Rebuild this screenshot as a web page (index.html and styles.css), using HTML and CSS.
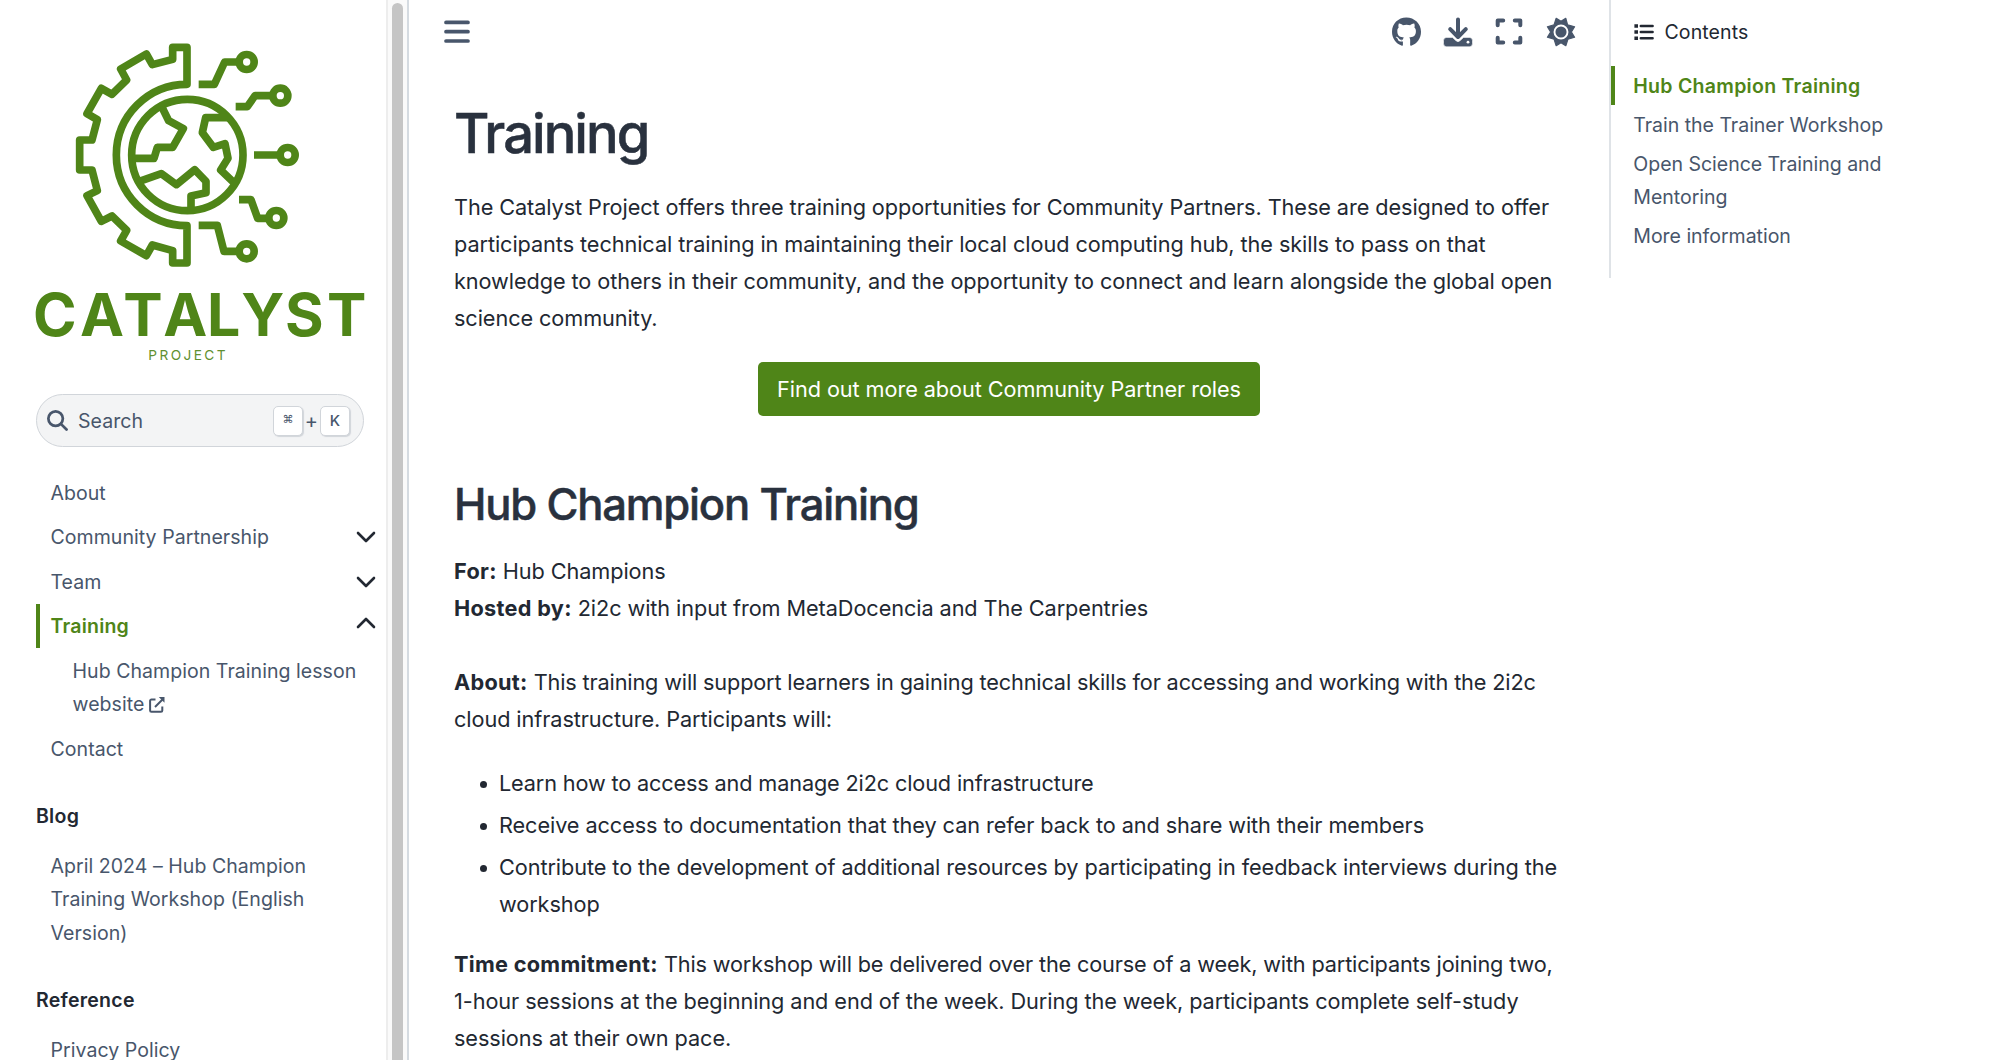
FILE: index.html
```html
<!DOCTYPE html>
<html lang="en">
<head>
<meta charset="utf-8">
<title>Training</title>
<link rel="stylesheet" href="styles.css">
</head>
<body>
<div class="page">
  <aside class="sidebar">
    <div class="sidebar-content">
      <a class="logo">
        <svg viewBox="48 60 984 972" width="328" height="324">
          <g fill="none" stroke="#4f8518" stroke-width="23" stroke-linejoin="round">
            <path d="M501 193V82H458V118L397 134L379 102L302 147L320 180L276 223L244 205L201 281L232 299L216 360H179V450H216L232 512L201 527L244 604L276 588L320 631L302 663L379 707L397 675L458 692V729H501V617A212 212 0 0 1 501 193Z"/>
            <circle cx="502" cy="405" r="167"/>
            <path d="M426 262L446 302L490 326L458 382H412L402 415H338"/>
            <path d="M627 293H557L547 338L580 382L615 371L624 415L602 450L642 488"/>
            <path d="M358 484L424 461L469 494L524 449L558 484V518L513 528V572"/>
            <path d="M536 193H583L614 126H655M647 260H682L705 227H755M702 405H775M657 539H693L713 595H744M536 616H592L612 694H655"/>
            <circle cx="680" cy="126" r="22.5"/>
            <circle cx="781" cy="227" r="22.5"/>
            <circle cx="803" cy="405" r="22.5"/>
            <circle cx="769" cy="594" r="22.5"/>
            <circle cx="680" cy="694" r="22.5"/>
          </g>
          <text class="logo-name" y="948" x="39 180 310 430 561 664 795 921">CATALYST</text>
          <text class="logo-sub" y="1020" x="385">PROJECT</text>
        </svg>
      </a>
      <div class="search">
        <svg class="search-icon" viewBox="0 0 20 20"><circle cx="8.2" cy="8.2" r="6.9"/><path d="M13.2 13.2L18.6 18.6"/></svg>
        <span class="search-label">Search</span>
        <kbd class="cmd">⌘</kbd><span class="plus">+</span><kbd>K</kbd>
      </div>
      <nav class="nav">
        <a class="item">About</a>
        <a class="item">Community Partnership<svg class="chevron" viewBox="0 0 20 12"><path d="M2 2L10 10L18 2"/></svg></a>
        <a class="item">Team<svg class="chevron" viewBox="0 0 20 12"><path d="M2 2L10 10L18 2"/></svg></a>
        <a class="item active"><span>Training</span><svg class="chevron up" viewBox="0 0 20 12"><path d="M2 10L10 2L18 10"/></svg></a>
        <a class="item sub"><span>Hub Champion Training lesson<br>website <svg class="external" viewBox="0 0 16 16"><path d="M6.5 2.5H2.4A1.3 1.3 0 0 0 1.1 3.8V13.5A1.3 1.3 0 0 0 2.4 14.8H12A1.3 1.3 0 0 0 13.3 13.5V9.5"/><path d="M6 10L14 2"/><path class="solid" d="M9.8 0H15.5V5.7Z"/></svg></span></a>
        <a class="item">Contact</a>
        <p class="caption">Blog</p>
        <a class="item"><span>April 2024 – Hub Champion<br>Training Workshop (English<br>Version)</span></a>
        <p class="caption">Reference</p>
        <a class="item">Privacy Policy</a>
      </nav>
    </div>
    <div class="scrollbar"><div class="thumb"></div></div>
  </aside>
  <main class="main">
    <header class="toolbar">
      <svg class="menu" viewBox="0 0 26 24"><path d="M2 2.4H24M2 11.7H24M2 21H24"/></svg>
      <div class="actions">
        <svg viewBox="0 0 496 512" width="29" height="30"><path d="M165.900 397.400c0 2-2.300 3.600-5.200 3.600-3.300.3-5.600-1.300-5.600-3.600 0-2 2.300-3.600 5.200-3.600 3-.3 5.600 1.300 5.600 3.600zM244.800 8C106.100 8 0 113.300 0 252c0 110.900 69.800 205.800 169.500 239.200 12.800 2.300 17.300-5.600 17.300-12.100 0-6.200-.3-40.400-.3-61.400 0 0-70 15-84.700-29.800 0 0-11.400-29.100-27.800-36.600 0 0-22.900-15.700 1.600-15.400 0 0 24.900 2 38.600 25.800 21.900 38.600 58.600 27.500 72.900 20.900 2.300-16 8.800-27.100 16-33.700-55.900-6.200-112.300-14.300-112.300-110.500 0-27.500 7.600-41.300 23.600-58.900-2.600-6.500-11.100-33.300 2.600-67.900 20.900-6.500 69 27 69 27 20-5.600 41.500-8.500 62.800-8.500s42.800 2.900 62.800 8.500c0 0 48.100-33.600 69-27 13.700 34.700 5.200 61.400 2.600 67.900 16 17.700 25.800 31.500 25.800 58.900 0 96.500-58.900 104.200-114.800 110.500 9.200 7.900 17 22.900 17 46.400 0 33.700-.3 75.400-.3 83.600 0 6.500 4.600 14.400 17.300 12.100C428.200 457.800 496 362.900 496 252 496 113.300 383.500 8 244.800 8z"/></svg>
        <svg viewBox="0 0 30 30" width="30" height="30"><path d="M15 2.500V19M7.200 12.200L15 20L22.800 12.200" class="stroke"/><path d="M3.700 20.400H9.500L12.800 23.600A3.100 3.100 0 0 0 17.200 23.600L20.500 20.400H26.300A3.200 3.200 0 0 1 29.500 23.600V26.600A3.200 3.200 0 0 1 26.300 29.800H3.700A3.200 3.200 0 0 1 .5 26.600V23.600A3.200 3.200 0 0 1 3.700 20.400Z" stroke="#fff" stroke-width=".6"/><circle cx="25" cy="25.200" r="1.400" fill="#fff"/></svg>
        <svg viewBox="0 0 28 30" width="28" height="30"><path d="M2.700 8.200V3.400H8.200M19.800 3.400H25.300V8.200M2.700 20.700V25.500H8.200M19.800 25.500H25.300V20.700" class="stroke"/></svg>
        <svg viewBox="0 0 30 30" width="30" height="30"><path stroke="#48566b" stroke-width="1.200" stroke-linejoin="round" d="M10.200 1.300L15 4.300L19.800 1.300L21.600 7.800L28.600 9.800L25.400 15L28.600 20.200L21.900 22.200L19.800 28.700L15 25.700L10.200 28.700L8.100 22.200L1.400 20.200L4.600 15L1.400 9.800L8.100 7.800Z"/><circle cx="15" cy="15" r="6.500" fill="#48566b" stroke="#fff" stroke-width="1.900"/></svg>
      </div>
    </header>
    <article class="article">
      <h1>Training</h1>
      <p>The Catalyst Project offers three training opportunities for Community Partners. These are designed to offer<br>participants technical training in maintaining their local cloud computing hub, the skills to pass on that<br>knowledge to others in their community, and the opportunity to connect and learn alongside the global open<br>science community.</p>
      <div class="cta"><a class="button">Find out more about Community Partner roles</a></div>
      <h2>Hub Champion Training</h2>
      <p><strong>For:</strong> Hub Champions<br><strong>Hosted by:</strong> 2i2c with input from MetaDocencia and The Carpentries<br><br><strong>About:</strong> <span class="tight">This training will support learners in gaining technical skills for accessing and working with the 2i2c</span><br>cloud infrastructure. Participants will:</p>
      <ul>
        <li><span class="tight">Learn how to access and manage 2i2c cloud infrastructure</span></li>
        <li>Receive access to documentation that they can refer back to and share with their members</li>
        <li>Contribute to the development of additional resources by participating in feedback interviews during the<br>workshop</li>
      </ul>
      <p><strong>Time commitment:</strong> <span class="tight">This workshop will be delivered over the course of a week, with participants joining two,</span><br>1-hour sessions at the beginning and end of the week. During the week, participants complete self-study<br>sessions at their own pace.</p>
    </article>
  </main>
  <aside class="toc">
    <div class="toc-title"><svg viewBox="0 0 20 18" width="20" height="18"><path d="M6.800 3H18.600M6.800 9H18.600M6.800 15.300H18.600"/><path class="dots" d="M.4 3H4M.4 9H4M.4 15.300H4"/></svg>Contents</div>
    <a class="toc-item current">Hub Champion Training</a>
    <a class="toc-item">Train the Trainer Workshop</a>
    <a class="toc-item">Open Science Training and<br>Mentoring</a>
    <a class="toc-item">More information</a>
  </aside>
</div>
</body>
</html>
```
FILE: styles.css
```css
* { box-sizing: border-box; }
html, body { height: 100%; margin: 0; overflow: hidden; }
body {
  background: #fff;
  color: #222832;
  font-family: Inter, "Liberation Sans", sans-serif;
  font-size: 21.7px;
  line-height: 37px;
  letter-spacing: -0.08px;
}
.page { display: flex; height: 1060px; overflow: hidden; }

.sidebar {
  display: flex;
  flex: none;
  width: 409px;
  border-right: 2px solid #d5dbe1;
  font-size: 19.55px;
  line-height: 33.3px;
  letter-spacing: 0.04px;
}
.sidebar-content { width: 386px; padding: 40px 0 0 36px; height: 1060px; overflow: hidden; }
.scrollbar {
  flex: 1;
  padding: 3px 3px 0 4px;
  background: #fafafa;
  border-left: 2px solid #ededed;
}
.thumb { width: 11px; height: 1100px; border-radius: 6px; background: #c5c5c5; }

.logo, .logo svg { display: block; overflow: visible; }
.logo-name { fill: #4f8518; font-size: 177px; font-weight: 700; letter-spacing: 0; }
.logo-sub { fill: #5f9030; font-size: 41px; letter-spacing: 7.2px; }

.search {
  display: flex;
  align-items: center;
  width: 328px;
  height: 53px;
  margin: 30px 0 23.4px;
  padding: 0 13px 0 10px;
  border: 1px solid #d1d5da;
  border-radius: 27px;
  background: #f3f4f5;
  color: #48566b;
}
.search-icon { width: 21px; height: 21px; margin-right: 10px; fill: none; stroke: #48566b; stroke-width: 2.6; stroke-linecap: round; }
.search-label { flex: 1; padding-top: 2px; }
kbd {
  display: flex;
  justify-content: center;
  width: 30px;
  height: 30px;
  border: 1px solid #d1d5da;
  border-radius: 5px;
  background: #fff;
  box-shadow: 1px 1px 1px #d1d5da;
  font: 500 15px/27px Inter, sans-serif;
}
kbd.cmd { font: 11px/26px "DejaVu Sans", sans-serif; }
.plus { width: 17px; text-align: center; font-size: 20px; padding-top: 2px; }

.item {
  display: flex;
  justify-content: space-between;
  padding: 6.6px 0 4.6px 10.5px;
  border-left: 4px solid transparent;
  color: #48566b;
}
.item.sub { padding-left: 32.5px; }
.item.active { border-color: #4f8518; color: #4f8518; font-weight: 600; letter-spacing: 0.2px; }
.chevron { width: 20px; height: 12px; margin: 10px 10.5px 0 0; fill: none; stroke: #222832; stroke-width: 2.6; stroke-linecap: round; stroke-linejoin: round; }
.chevron.up { margin-top: 7px; }
.external { width: 16px; height: 16px; margin-left: -1px; vertical-align: -2px; fill: none; stroke: #48566b; stroke-width: 2; }
.external .solid { fill: #48566b; stroke: none; }
.caption { margin: 29.5px 0 10px; font-weight: 600; letter-spacing: 0.25px; }

.main { flex: none; width: 1200px; }
.toolbar { display: flex; justify-content: space-between; height: 101px; padding: 17px 33.5px 0 35px; }
.menu { width: 26px; height: 24px; margin-top: 3px; fill: none; stroke: #48566b; stroke-width: 3.7; stroke-linecap: round; }
.actions { display: flex; gap: 22.3px; fill: #48566b; }
.actions .stroke { fill: none; stroke: #48566b; stroke-width: 4; stroke-linecap: round; stroke-linejoin: round; }

.article { padding-left: 45px; width: 1155px; white-space: nowrap; }
h1, h2 { margin: 0; font-weight: 500; color: #29313e; -webkit-text-stroke: 0.5px #29313e; }
h1 { margin-bottom: 23.2px; font-size: 54.3px; line-height: 64.4px; letter-spacing: -2px; }
h2 { margin: 62.6px 0 23px; font-size: 43.6px; line-height: 51.5px; letter-spacing: -1.2px; }
.article p { margin: 0; }
.article strong { font-weight: 700; letter-spacing: 0.3px; }
.tight { letter-spacing: -0.15px; }
.cta { display: flex; justify-content: center; margin-top: 25px; }
.button {
  padding: 9.2px 19px 8.3px;
  border-radius: 5px;
  background: #4f8518;
  color: #fff;
}
ul { list-style: none; margin: 26.6px 0 22.6px; padding-left: 25.5px; }
li { position: relative; padding-left: 19.5px; }
li::before { content: ""; position: absolute; left: 0; top: 16px; width: 7px; height: 7px; border-radius: 50%; background: #222832; }
li + li { margin-top: 5.3px; }

.toc {
  width: 345px;
  height: 277.5px;
  padding-top: 15.5px;
  border-left: 2px solid #dfe3e7;
  color: #48566b;
  font-size: 19.55px;
  line-height: 33.3px;
  letter-spacing: -0.03px;
}
.toc-title { display: flex; align-items: center; gap: 11px; height: 33.3px; margin-bottom: 17.2px; padding-left: 22.5px; color: #222832; letter-spacing: 0.1px; }
.toc-title svg { stroke: #222832; stroke-width: 2.5; stroke-linecap: round; }
.toc-title .dots { stroke-width: 3.6; stroke-linecap: butt; }
.toc-item { display: block; padding: 3.9px 0 1.7px 22.3px; }
.toc-item.current { padding-left: 18.3px; border-left: 4px solid #4f8518; color: #4f8518; font-weight: 600; letter-spacing: 0.26px; }
```
